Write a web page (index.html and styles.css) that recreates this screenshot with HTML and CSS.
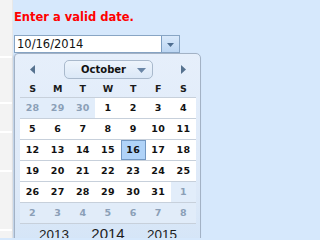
FILE: index.html
```html
<!DOCTYPE html>
<html>
<head>
<meta charset="utf-8">
<link rel="stylesheet" href="styles.css">
</head>
<body>
<div class="page">
  <div class="strip">
    <div class="seg s1"></div>
    <div class="seg s2"></div>
    <div class="seg s3"></div>
    <div class="seg s4"></div>
    <div class="seg s5"></div>
  </div>
  <div class="panel">
    <div class="error">Enter a valid date.</div>
    <div class="field">
      <span class="value">10/16/2014</span>
      <span class="drop"><svg width="7" height="4" viewBox="0 0 7 4"><polygon points="0,0 7,0 3.5,4" fill="#4e6d90"/></svg></span>
    </div>
    <div class="popup">
      <div class="nav">
        <span class="arrow"><svg width="5" height="9" viewBox="0 0 5 9"><polygon points="5,0 5,9 0,4.5" fill="#56728f"/></svg></span>
        <span class="mid">
          <span class="month">October<svg class="caret" width="9" height="5" viewBox="0 0 9 5"><polygon points="0,0 9,0 4.5,5" fill="#6a86a6"/></svg></span>
        </span>
        <span class="arrow"><svg width="5" height="9" viewBox="0 0 5 9"><polygon points="0,0 0,9 5,4.5" fill="#56728f"/></svg></span>
      </div>
      <div class="dows">
        <span>S</span><span>M</span><span>T</span><span>W</span><span>T</span><span>F</span><span>S</span>
      </div>
      <div class="grid">
        <div class="week">
          <span class="day other">28</span><span class="day other">29</span><span class="day other">30</span><span class="day">1</span><span class="day">2</span><span class="day">3</span><span class="day">4</span>
        </div>
        <div class="week">
          <span class="day">5</span><span class="day">6</span><span class="day">7</span><span class="day">8</span><span class="day">9</span><span class="day">10</span><span class="day">11</span>
        </div>
        <div class="week">
          <span class="day">12</span><span class="day">13</span><span class="day">14</span><span class="day">15</span><span class="day selected">16</span><span class="day">17</span><span class="day">18</span>
        </div>
        <div class="week">
          <span class="day">19</span><span class="day">20</span><span class="day">21</span><span class="day">22</span><span class="day">23</span><span class="day">24</span><span class="day">25</span>
        </div>
        <div class="week">
          <span class="day">26</span><span class="day">27</span><span class="day">28</span><span class="day">29</span><span class="day">30</span><span class="day">31</span><span class="day other">1</span>
        </div>
        <div class="week last">
          <span class="day other">2</span><span class="day other">3</span><span class="day other">4</span><span class="day other">5</span><span class="day other">6</span><span class="day other">7</span><span class="day other">8</span>
        </div>
      </div>
      <div class="years">
        <span class="year">2013</span><span class="year current">2014</span><span class="year">2015</span>
      </div>
    </div>
  </div>
</div>
</body>
</html>
```

FILE: styles.css
```css
html, body {
  margin: 0;
  padding: 0;
}
body {
  width: 208px;
  height: 238px;
  overflow: hidden;
  font-family: "DejaVu Sans", Verdana, sans-serif;
  background: #d6e8fc;
}
.page {
  display: flex;
  height: 238px;
}
.strip {
  width: 12px;
  flex: none;
  background: #f3f3f3;
  border-right: 1px solid #e8e8e8;
  display: flex;
  flex-direction: column;
}
.seg {
  flex: none;
  border-bottom: 2px solid #ffffff;
}
.s1 { height: 56px; }
.s2 { height: 44px; }
.s3 { height: 27px; }
.s4 { height: 37px; }
.s5 { height: 57px; }

.panel {
  flex: 1;
  background: #d6e8fc;
  padding: 10px 0 0 1px;
}
.error {
  color: #ff0000;
  font-weight: bold;
  font-size: 11.5px;
  line-height: 14px;
  height: 14px;
  white-space: nowrap;
}
.field {
  margin-top: 11px;
  width: 166px;
  height: 18px;
  box-sizing: border-box;
  border: 1px solid #88a5c4;
  background: #ffffff;
  display: flex;
}
.value {
  flex: 1;
  font-size: 11.5px;
  line-height: 16px;
  padding-left: 2px;
  color: #111;
}
.drop {
  width: 17px;
  flex: none;
  border-left: 1px solid #7d9ec2;
  background: linear-gradient(#d9e9fb, #bcd6f3);
  display: flex;
  align-items: center;
  justify-content: center;
}
.drop svg { display: block; margin-top: 1px; }

.popup {
  width: 187px;
  box-sizing: border-box;
  border: 1px solid #a3b2c5;
  border-radius: 4px 5px 0 0;
  background: linear-gradient(#e6effb, #dde9f8 70%, #d3e4f7);
  padding: 6px 4px 0 5px;
  box-shadow: -1px 1px 2px rgba(60, 80, 110, 0.18);
  height: 200px;
}
.nav {
  display: flex;
  align-items: center;
  height: 19px;
}
.arrow {
  width: 25px;
  flex: none;
  display: flex;
  justify-content: center;
  align-items: center;
}
.arrow svg { display: block; }
.mid {
  flex: 1;
  display: flex;
  justify-content: center;
}
.month {
  width: 89px;
  height: 19px;
  box-sizing: border-box;
  border: 1px solid #a9b9cc;
  border-radius: 5px;
  background: linear-gradient(#edf4fc, #dbe8f7);
  display: flex;
  align-items: center;
  justify-content: flex-end;
  padding-right: 6px;
  font-weight: bold;
  font-size: 10px;
  color: #111;
  margin-left: 1px;
}
.caret {
  display: block;
  margin-left: 11px;
  margin-top: 1px;
}
.dows {
  display: grid;
  grid-template-columns: repeat(7, 1fr);
  padding-top: 2px;
  height: 16px;
  line-height: 16px;
  font-size: 9.5px;
  font-weight: bold;
  color: #1b1b1b;
  text-align: center;
}
.grid {
  border-bottom: 1px solid #c7d0db;
}
.week {
  display: grid;
  grid-template-columns: repeat(7, 1fr);
  border-top: 1px solid #c7d0db;
  height: 20px;
}
.day {
  background: #ffffff;
  text-align: center;
  font-size: 9.5px;
  font-weight: bold;
  letter-spacing: 0.3px;
  line-height: 20px;
  color: #111;
}
.day.other {
  background: #e2edfa;
  color: #8b9fb7;
}
.week.last .day.other {
  background: #e1ecf9;
}
.day.selected {
  background: #b0d3f8;
  box-shadow: inset 0 0 0 1px #7398c2;
}
.years {
  display: flex;
  justify-content: center;
  align-items: baseline;
  padding-top: 2px;
  font-family: "Liberation Sans", Arial, sans-serif;
  color: #1c1c1c;
}
.year {
  width: 54px;
  text-align: center;
  font-size: 13.5px;
  line-height: 15px;
}
.year.current {
  font-size: 15px;
}
```
